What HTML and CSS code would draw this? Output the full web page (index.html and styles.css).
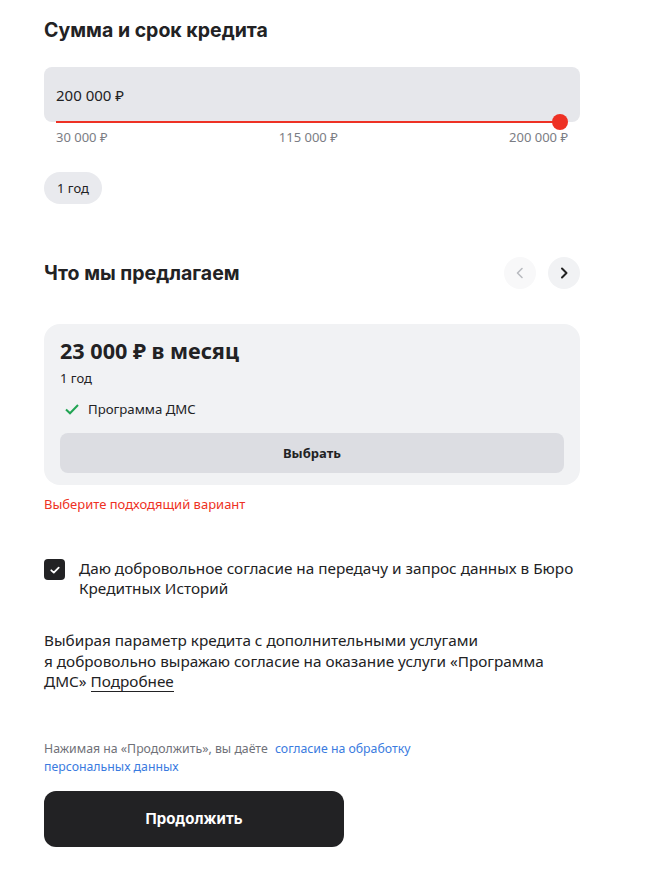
FILE: index.html
```html
<!DOCTYPE html>
<html lang="ru">
<head>
<meta charset="utf-8">
<link rel="stylesheet" href="styles.css">
</head>
<body>
<main class="page">
  <h2 class="title title-first">Сумма и срок кредита</h2>
  <div class="amount">
    <div class="amount-field">200 000 ₽</div>
    <div class="slider"><span class="thumb"></span></div>
  </div>
  <div class="ticks"><span>30 000 ₽</span><span>115 000 ₽</span><span>200 000 ₽</span></div>
  <div class="chips"><span class="chip">1 год</span></div>

  <div class="offer-head">
    <h2 class="title">Что мы предлагаем</h2>
    <div class="arrows">
      <button class="arrow arrow-disabled" aria-label="Назад"><svg width="14" height="14" viewBox="0 0 14 14"><path d="M9 2.5 4.5 7 9 11.5" fill="none" stroke="#b9bbc0" stroke-width="1.6" stroke-linecap="round" stroke-linejoin="round"/></svg></button>
      <button class="arrow" aria-label="Вперёд"><svg width="14" height="14" viewBox="0 0 14 14"><path d="M5 2.5 9.5 7 5 11.5" fill="none" stroke="#222" stroke-width="2" stroke-linecap="round" stroke-linejoin="round"/></svg></button>
    </div>
  </div>

  <div class="card">
    <div class="price">23 000 ₽ в месяц</div>
    <div class="term">1 год</div>
    <div class="feature"><svg width="16" height="16" viewBox="0 0 16 16"><path d="M2 8.5 6 12.3 14 4" fill="none" stroke="#21a453" stroke-width="2"/></svg><span>Программа ДМС</span></div>
    <button class="select">Выбрать</button>
  </div>
  <p class="error">Выберите подходящий вариант</p>

  <label class="consent">
    <span class="box"><svg width="12" height="12" viewBox="0 0 12 12"><path d="M2.3 6.3 4.8 8.6 9.7 3.6" fill="none" stroke="#fff" stroke-width="1.8" stroke-linecap="round" stroke-linejoin="round"/></svg></span>
    <span class="consent-text">Даю добровольное согласие на передачу и запрос данных в Бюро Кредитных Историй</span>
  </label>

  <p class="note">Выбирая параметр кредита с дополнительными услугами<br>я добровольно выражаю согласие на оказание услуги «Программа ДМС» <a href="#" class="more">Подробнее</a></p>

  <p class="legal">Нажимая на «Продолжить», вы даёте <a href="#" class="link">согласие на обработку персональных данных</a></p>

  <button class="continue">Продолжить</button>
</main>
</body>
</html>
```
FILE: styles.css
```css
* { box-sizing: border-box; }
body {
  margin: 0;
  background: #fff;
  color: #222224;
  font-family: "Noto Sans", "Open Sans", sans-serif;
}
.page {
  width: 536px;
  margin-left: 44px;
  padding-top: 16px;
  padding-bottom: 40px;
}
.title {
  margin: 0;
  font-family: "Inter", "Liberation Sans", sans-serif;
  font-weight: 700;
  font-size: 19.5px;
  line-height: 28px;
  color: #222224;
}
.title-first { margin-bottom: 23px; }
.amount { position: relative; }
.amount-field {
  height: 55px;
  background: #e6e7eb;
  border-radius: 8px;
  padding: 0 12px;
  display: flex;
  align-items: center;
  font-size: 15px;
  color: #222224;
}
.slider {
  position: relative;
  height: 2px;
  margin: -1px 20px 0 12px;
  background: #ee3124;
}
.thumb {
  position: absolute;
  right: -8px;
  top: -7px;
  width: 16px;
  height: 16px;
  border-radius: 50%;
  background: #ee3124;
}
.ticks {
  display: flex;
  justify-content: space-between;
  padding: 5px 12px 0 12px;
  font-size: 13px;
  line-height: 18px;
  color: #7b7d84;
}
.chips { margin-top: 26px; }
.chip {
  display: inline-flex;
  align-items: center;
  height: 32px;
  padding: 0 13px;
  border-radius: 16px;
  background: #e9eaee;
  font-size: 13px;
}
.offer-head {
  margin-top: 53px;
  display: flex;
  align-items: center;
  justify-content: space-between;
}
.arrows { display: flex; gap: 12px; }
.arrow {
  width: 32px;
  height: 32px;
  border: 0;
  border-radius: 50%;
  background: #f1f2f4;
  display: flex;
  align-items: center;
  justify-content: center;
  padding: 0;
}
.arrow-disabled { background: #f8f8f9; }
.card {
  margin-top: 35px;
  background: #f1f2f4;
  border-radius: 16px;
  padding: 13px 16px 12px;
}
.price {
  font-weight: 700;
  font-size: 21.6px;
  line-height: 28px;
}
.term {
  margin-top: 4px;
  font-size: 13px;
  line-height: 18px;
}
.feature {
  margin-top: 13px;
  display: flex;
  align-items: center;
  gap: 8px;
  padding-left: 4px;
  font-size: 13.2px;
  line-height: 18px;
}
.select {
  margin-top: 15px;
  width: 100%;
  height: 40px;
  border: 0;
  border-radius: 8px;
  background: #dcdde2;
  font-family: "Noto Sans", "Open Sans", sans-serif;
  font-weight: 700;
  font-size: 13px;
  color: #222224;
}
.error {
  margin: 10px 0 0;
  font-size: 13px;
  line-height: 18px;
  color: #ee3124;
}
.consent {
  margin-top: 45px;
  display: flex;
  align-items: flex-start;
  gap: 14px;
}
.box {
  flex: none;
  width: 21px;
  height: 21px;
  margin-top: 1px;
  border-radius: 4px;
  background: #222224;
  display: flex;
  align-items: center;
  justify-content: center;
}
.consent-text {
  font-size: 15.3px;
  line-height: 20px;
}
.note {
  margin: 32px 0 0;
  font-size: 15.3px;
  line-height: 20.5px;
}
.more {
  color: #222224;
  text-decoration: none;
  border-bottom: 1px solid #222224;
}
.legal {
  margin: 48px 0 0;
  width: 380px;
  font-size: 12.3px;
  line-height: 18px;
  color: #6f7178;
}
.link { color: #3a7be0; text-decoration: none; margin-left: 4px; }
.continue {
  margin-top: 15px;
  width: 300px;
  height: 56px;
  border: 0;
  border-radius: 12px;
  background: #222224;
  color: #fff;
  font-family: "Inter", "Liberation Sans", sans-serif;
  font-weight: 700;
  font-size: 15px;
}
```
